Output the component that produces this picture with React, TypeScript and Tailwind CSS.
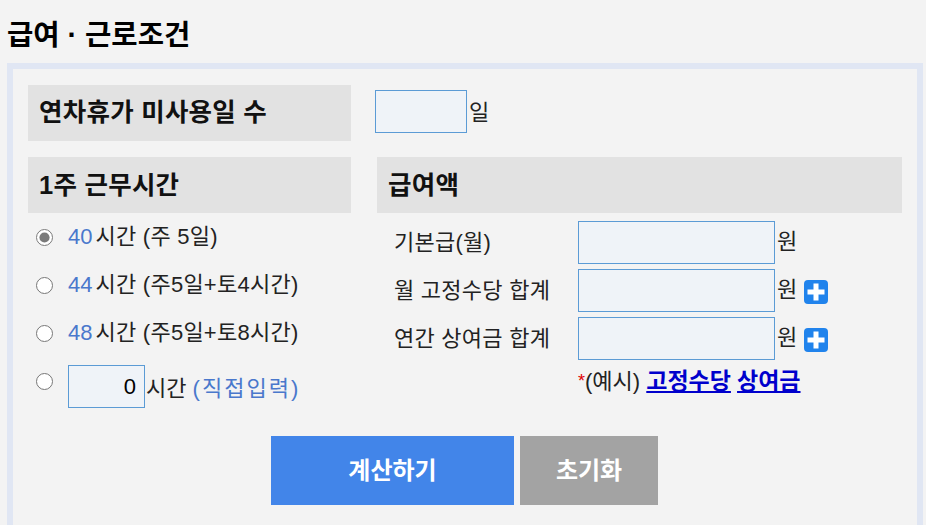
const font = "font-['Liberation_Sans','Noto_Sans_CJK_KR',sans-serif]";

function SectionTitle({ children, className = "" }: { children: React.ReactNode; className?: string }) {
  return (
    <div className={`flex h-[56px] shrink-0 items-center bg-[#e2e2e2] pl-[11px] text-[25.5px] font-bold tracking-[0.25px] text-[#111] ${className}`}>
      {children}
    </div>
  );
}

function HourOption({ hours, detail, checked }: { hours: string; detail: string; checked?: boolean }) {
  return (
    <label className="flex h-[48px] items-center">
      <input type="radio" name="hours" defaultChecked={checked} className="ml-[8px] mr-[15px] h-[17px] w-[17px] accent-[#7a7a7a]" />
      <span className="text-[#4a78cc]">{hours}</span>
      <span className="ml-[3px] tracking-[0.25px]">시간 {detail}</span>
    </label>
  );
}

function MoneyRow({ label, plus }: { label: string; plus?: boolean }) {
  return (
    <div className="flex h-[48px] items-center">
      <div className="w-[201px] pl-[17px] pt-[2px] tracking-[0.25px]">{label}</div>
      <input className="h-[43px] w-[197px] border border-[#5b9bd5] bg-[#eff3f8]" />
      <span className="ml-[2px]">원</span>
      {plus && (
        <svg viewBox="0 0 24 24" className="ml-[7px] mt-[3px] h-[24px] w-[24px]">
          <rect width="24" height="24" rx="4" fill="#2083ec" />
          <path d="M12 3.5v17M3.5 12h17" stroke="#fff" strokeWidth="5" />
        </svg>
      )}
    </div>
  );
}

export default function App() {
  return (
    <div className={`h-[525px] overflow-hidden bg-[#f3f3f3] text-[22px] leading-none text-[#222] ${font}`}>
      <h1 className="flex h-[63px] items-center pl-[7px] pt-[8px] text-[28.6px] font-bold text-black">급여 · 근로조건</h1>
      <div className="ml-[7px] h-[480px] w-[916px] border-[6px] border-[#e0e6f3] px-[15px] pt-[16px]">
        <div className="flex h-[56px] items-center">
          <SectionTitle className="w-[323px]">연차휴가 미사용일 수</SectionTitle>
          <input className="mb-[4px] ml-[24px] h-[43px] w-[92px] border border-[#5b9bd5] bg-[#eff3f8]" />
          <span className="ml-[2px]">일</span>
        </div>
        <div className="mt-[16px] flex gap-[26px]">
          <div className="w-[323px] shrink-0">
            <SectionTitle className="pt-[2px]">1주 근무시간</SectionTitle>
            <HourOption hours="40" detail="(주 5일)" checked />
            <HourOption hours="44" detail="(주5일+토4시간)" />
            <HourOption hours="48" detail="(주5일+토8시간)" />
            <div className="flex items-start pt-[8px]">
              <input type="radio" name="hours" className="ml-[8px] mr-[15px] mt-[8px] h-[17px] w-[17px]" />
              <input defaultValue="0" className="h-[43px] w-[77px] border border-[#5b9bd5] bg-[#eff3f8] pr-[8px] text-right text-black" />
              <span className="ml-[1px] mt-[13px]">시간 <span className="tracking-[2px] text-[#4a78cc]">(직접입력)</span></span>
            </div>
          </div>
          <div className="w-[525px] shrink-0">
            <SectionTitle className="pt-[2px]">급여액</SectionTitle>
            <div className="mt-[5px]">
              <MoneyRow label="기본급(월)" />
              <MoneyRow label="월 고정수당 합계" plus />
              <MoneyRow label="연간 상여금 합계" plus />
            </div>
            <div className="ml-[201px] mt-[8px] leading-[22px]">
              <span className="align-top text-[18px] text-[#e00000]">*</span>(예시){" "}
              <a href="#" className="text-[23px] font-bold text-[#0000cc] underline">고정수당</a>{" "}
              <a href="#" className="text-[23px] font-bold text-[#0000cc] underline">상여금</a>
            </div>
          </div>
        </div>
        <div className="ml-[243px] mt-[28px] flex gap-[6px] text-[24px] font-bold text-white">
          <button className="h-[69px] w-[243px] bg-[#4285e9]">계산하기</button>
          <button className="h-[69px] w-[138px] bg-[#a3a3a3]">초기화</button>
        </div>
      </div>
    </div>
  );
}
